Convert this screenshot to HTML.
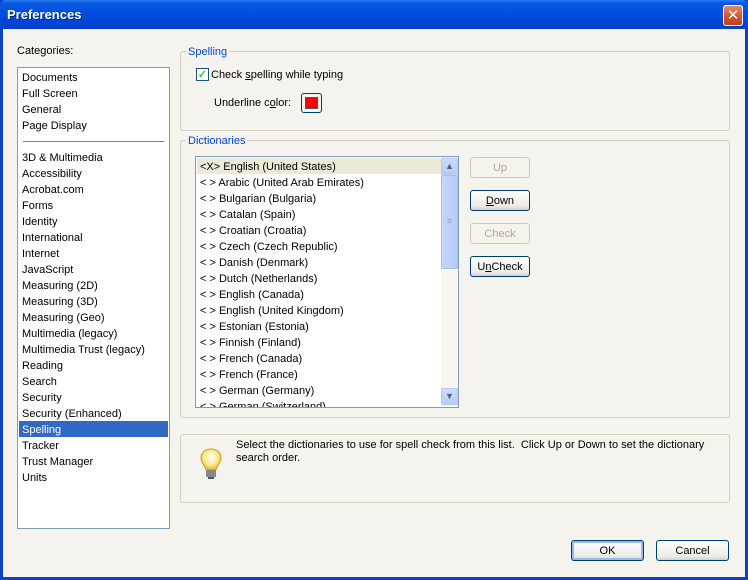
<!DOCTYPE html>
<html><head><meta charset="utf-8"><style>
*{margin:0;padding:0;box-sizing:border-box}
body{width:748px;height:580px;overflow:hidden;font-family:"Liberation Sans","DejaVu Sans",sans-serif;font-size:11px;color:#000;background:#0842c6;position:relative}
.a{position:absolute}
#title{left:0;top:0;width:748px;height:29px;background:linear-gradient(#2d7cf2 0,#0a5ae0 3px,#0352e0 10px,#0046d8 20px,#0040cc 29px);border-radius:6px 6px 0 0}
#title span{position:absolute;left:7px;top:7px;color:#fff;font-size:13px;font-weight:bold;text-shadow:1px 1px #0a2a80}
#close{left:723px;top:5px;width:20px;height:21px;background:linear-gradient(#e88a6a,#d2522c 60%,#c0401c);border:1px solid #fff;border-radius:3px;color:#fff;font-size:15px;font-weight:bold;text-align:center;line-height:19px}
#body{left:3px;top:29px;width:742px;height:548px;background:#f4f3ee}
.grp{border:1px solid #d0d0bf;border-radius:3px}
.leg{color:#0046d5;background:#f4f3ee;padding:0 2px}
.lb{background:#fff;border:1px solid #7f9db9}
.it{position:absolute;left:4px;height:16px;line-height:18px;white-space:nowrap}
.btn{border:1px solid #003c74;border-radius:3px;background:linear-gradient(#fff,#ecebe6 80%,#d6d0c5);text-align:center;line-height:20px;height:21px}
.dis{border-color:#c9c7ba;color:#aca899;background:#f5f4ea}
</style></head><body>
<div id="title" class="a"><span>Preferences</span></div>
<div id="close" class="a">✕</div>
<div id="body" class="a"></div>

<div class="a" style="left:17px;top:45px">Categories:</div>
<div class="a lb" style="left:17px;top:67px;width:153px;height:462px">
<div class="it" style="top:1px">Documents</div>
<div class="it" style="top:17px">Full Screen</div>
<div class="it" style="top:33px">General</div>
<div class="it" style="top:49px">Page Display</div>
<div class="a" style="left:5px;top:73px;width:141px;height:1px;background:#808080"></div>
<div class="it" style="top:81px">3D &amp; Multimedia</div>
<div class="it" style="top:97px">Accessibility</div>
<div class="it" style="top:113px">Acrobat.com</div>
<div class="it" style="top:129px">Forms</div>
<div class="it" style="top:145px">Identity</div>
<div class="it" style="top:161px">International</div>
<div class="it" style="top:177px">Internet</div>
<div class="it" style="top:193px">JavaScript</div>
<div class="it" style="top:209px">Measuring (2D)</div>
<div class="it" style="top:225px">Measuring (3D)</div>
<div class="it" style="top:241px">Measuring (Geo)</div>
<div class="it" style="top:257px">Multimedia (legacy)</div>
<div class="it" style="top:273px">Multimedia Trust (legacy)</div>
<div class="it" style="top:289px">Reading</div>
<div class="it" style="top:305px">Search</div>
<div class="it" style="top:321px">Security</div>
<div class="it" style="top:337px">Security (Enhanced)</div>
<div class="a" style="left:1px;top:353px;width:149px;height:16px;background:#316ac5"></div>
<div class="it" style="top:353px;color:#fff">Spelling</div>
<div class="it" style="top:369px">Tracker</div>
<div class="it" style="top:385px">Trust Manager</div>
<div class="it" style="top:401px">Units</div>
</div>

<div class="a grp" style="left:180px;top:51px;width:550px;height:80px"></div>
<div class="a leg" style="left:186px;top:46px">Spelling</div>
<div class="a" style="left:196px;top:68px;width:13px;height:13px;border:1px solid #1c5180;background:#fff;color:#21a121;font-size:12px;line-height:11px;text-align:center;font-weight:bold">✓</div>
<div class="a" style="left:211px;top:69px">Check <u>s</u>pelling while typing</div>
<div class="a" style="left:214px;top:97px">Underline c<u>o</u>lor:</div>
<div class="a" style="left:301px;top:93px;width:21px;height:20px;border:1px solid #003c74;border-radius:3px;background:#f4f3ee;padding:3px"><div style="width:13px;height:12px;background:#f00;border:1px solid #555"></div></div>

<div class="a grp" style="left:180px;top:140px;width:550px;height:278px"></div>
<div class="a leg" style="left:186px;top:135px">Dictionaries</div>
<div class="a lb" style="left:195px;top:156px;width:264px;height:252px;overflow:hidden">
<div class="a" style="left:1px;top:1px;width:245px;height:16px;background:#ece9d8"></div>
<div class="it" style="top:1px">&lt;X&gt; English (United States)</div>
<div class="it" style="top:17px">&lt; &gt; Arabic (United Arab Emirates)</div>
<div class="it" style="top:33px">&lt; &gt; Bulgarian (Bulgaria)</div>
<div class="it" style="top:49px">&lt; &gt; Catalan (Spain)</div>
<div class="it" style="top:65px">&lt; &gt; Croatian (Croatia)</div>
<div class="it" style="top:81px">&lt; &gt; Czech (Czech Republic)</div>
<div class="it" style="top:97px">&lt; &gt; Danish (Denmark)</div>
<div class="it" style="top:113px">&lt; &gt; Dutch (Netherlands)</div>
<div class="it" style="top:129px">&lt; &gt; English (Canada)</div>
<div class="it" style="top:145px">&lt; &gt; English (United Kingdom)</div>
<div class="it" style="top:161px">&lt; &gt; Estonian (Estonia)</div>
<div class="it" style="top:177px">&lt; &gt; Finnish (Finland)</div>
<div class="it" style="top:193px">&lt; &gt; French (Canada)</div>
<div class="it" style="top:209px">&lt; &gt; French (France)</div>
<div class="it" style="top:225px">&lt; &gt; German (Germany)</div>
<div class="it" style="top:241px">&lt; &gt; German (Switzerland)</div>
<div class="a" style="left:245px;top:0;width:17px;height:250px;background:#f7f6f1"></div>
<div class="a" style="left:245px;top:1px;width:17px;height:17px;background:linear-gradient(#cfdcfb,#b7cbf6);border:1px solid #b5c8f0;border-radius:2px;text-align:center;font-size:9px;line-height:15px;color:#4d6185">▲</div>
<div class="a" style="left:245px;top:18px;width:17px;height:94px;background:linear-gradient(90deg,#c6d5fc,#b8cbf8);border:1px solid #a8bdef;border-radius:2px;text-align:center;line-height:90px;color:#8ba4e0;font-size:9px">≡</div>
<div class="a" style="left:245px;top:231px;width:17px;height:17px;background:linear-gradient(#cfdcfb,#b7cbf6);border:1px solid #b5c8f0;border-radius:2px;text-align:center;font-size:9px;line-height:15px;color:#4d6185">▼</div>
</div>
<div class="a btn dis" style="left:470px;top:157px;width:60px">Up</div>
<div class="a btn" style="left:470px;top:190px;width:60px"><u>D</u>own</div>
<div class="a btn dis" style="left:470px;top:223px;width:60px">Check</div>
<div class="a btn" style="left:470px;top:256px;width:60px">U<u>n</u>Check</div>

<div class="a grp" style="left:180px;top:434px;width:550px;height:69px"></div>
<svg class="a" style="left:198px;top:447px" width="26" height="36" viewBox="0 0 26 36">
<defs><radialGradient id="g" cx="0.5" cy="0.4" r="0.6"><stop offset="0" stop-color="#fffff4"/><stop offset="0.6" stop-color="#fbe98a"/><stop offset="1" stop-color="#e6b830"/></radialGradient></defs>
<path d="M13 2C7 2 3 6 3 11c0 5 4 7 5 12h10c1-5 5-7 5-12 0-5-4-9-10-9z" fill="url(#g)" stroke="#c89a20"/>
<rect x="8" y="23" width="10" height="7" fill="#888"/><rect x="10" y="30" width="6" height="2" fill="#555"/>
</svg>
<div class="a" style="left:236px;top:439px;width:480px;line-height:13px">Select the dictionaries to use for spell check from this list.&nbsp; Click Up or Down to set the dictionary search order.</div>

<div class="a btn" style="left:571px;top:540px;width:73px;border-color:#003c74;box-shadow:inset 0 0 0 2px #9ab8f0">OK</div>
<div class="a btn" style="left:656px;top:540px;width:73px">Cancel</div>
</body></html>
